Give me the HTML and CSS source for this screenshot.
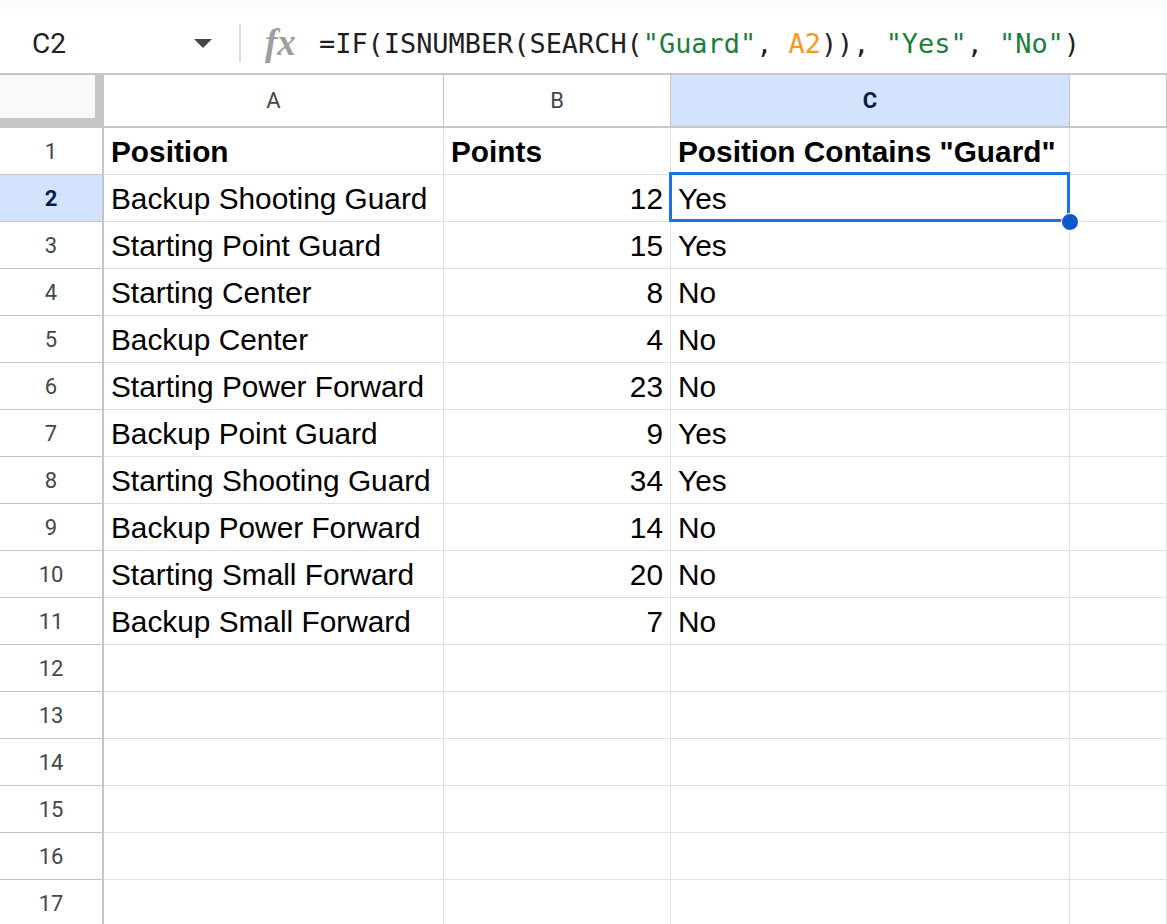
FILE: index.html
```html
<!DOCTYPE html>
<html lang="en">

<head>
    <meta charset="UTF-8">
    <title>Sheet</title>
    <link rel="stylesheet" href="styles.css">
</head>

<body>
    <div class="topstrip"></div>
    <div class="formulabar">
        <div class="namebox">
            <span class="namebox-text">C2</span>
            <span class="namebox-arrow"></span>
        </div>
        <div class="divider"></div>
        <span class="fx">fx</span>
        <div class="formula">=IF(ISNUMBER(SEARCH(<span class="str">"Guard"</span>, <span class="ref">A2</span>)), <span class="str">"Yes"</span>, <span class="str">"No"</span>)</div>
    </div>

    <div class="grid">
        <div class="corner"><div class="corner-inner"></div></div>
        <div class="colhdr">A</div>
        <div class="colhdr">B</div>
        <div class="colhdr active">C</div>
        <div class="colhdr"></div>

        <div class="rowhdr">1</div>
        <div class="cell bold">Position</div>
        <div class="cell bold">Points</div>
        <div class="cell bold">Position Contains "Guard"</div>
        <div class="cell"></div>

        <div class="rowhdr active">2</div>
        <div class="cell">Backup Shooting Guard</div>
        <div class="cell num">12</div>
        <div class="cell selected">Yes</div>
        <div class="cell"></div>

        <div class="rowhdr">3</div>
        <div class="cell">Starting Point Guard</div>
        <div class="cell num">15</div>
        <div class="cell">Yes</div>
        <div class="cell"></div>

        <div class="rowhdr">4</div>
        <div class="cell">Starting Center</div>
        <div class="cell num">8</div>
        <div class="cell">No</div>
        <div class="cell"></div>

        <div class="rowhdr">5</div>
        <div class="cell">Backup Center</div>
        <div class="cell num">4</div>
        <div class="cell">No</div>
        <div class="cell"></div>

        <div class="rowhdr">6</div>
        <div class="cell">Starting Power Forward</div>
        <div class="cell num">23</div>
        <div class="cell">No</div>
        <div class="cell"></div>

        <div class="rowhdr">7</div>
        <div class="cell">Backup Point Guard</div>
        <div class="cell num">9</div>
        <div class="cell">Yes</div>
        <div class="cell"></div>

        <div class="rowhdr">8</div>
        <div class="cell">Starting Shooting Guard</div>
        <div class="cell num">34</div>
        <div class="cell">Yes</div>
        <div class="cell"></div>

        <div class="rowhdr">9</div>
        <div class="cell">Backup Power Forward</div>
        <div class="cell num">14</div>
        <div class="cell">No</div>
        <div class="cell"></div>

        <div class="rowhdr">10</div>
        <div class="cell">Starting Small Forward</div>
        <div class="cell num">20</div>
        <div class="cell">No</div>
        <div class="cell"></div>

        <div class="rowhdr">11</div>
        <div class="cell">Backup Small Forward</div>
        <div class="cell num">7</div>
        <div class="cell">No</div>
        <div class="cell"></div>

        <div class="rowhdr">12</div>
        <div class="cell"></div><div class="cell"></div><div class="cell"></div><div class="cell"></div>
        <div class="rowhdr">13</div>
        <div class="cell"></div><div class="cell"></div><div class="cell"></div><div class="cell"></div>
        <div class="rowhdr">14</div>
        <div class="cell"></div><div class="cell"></div><div class="cell"></div><div class="cell"></div>
        <div class="rowhdr">15</div>
        <div class="cell"></div><div class="cell"></div><div class="cell"></div><div class="cell"></div>
        <div class="rowhdr">16</div>
        <div class="cell"></div><div class="cell"></div><div class="cell"></div><div class="cell"></div>
        <div class="rowhdr">17</div>
        <div class="cell"></div><div class="cell"></div><div class="cell"></div><div class="cell"></div>
    </div>
</body>

</html>
```

FILE: styles.css
```css
html,
body {
    margin: 0;
    height: 100%;
    overflow: hidden;
    background: #fff;
}

body {
    font-family: "Liberation Sans", Arial, sans-serif;
    color: #000;
}

.topstrip {
    height: 9px;
    background: #f9fbfd;
}

.formulabar {
    height: 64px;
    display: flex;
    align-items: center;
    border-bottom: 2px solid #c4c7c5;
}

.namebox {
    width: 239px;
    box-sizing: border-box;
    padding-left: 32px;
    padding-right: 27px;
    display: flex;
    align-items: center;
    justify-content: space-between;
}

.namebox-text {
    font-family: Roboto, sans-serif;
    font-size: 28px;
    color: #1f1f1f;
    margin-top: 4px;
}

.namebox-arrow {
    width: 0;
    height: 0;
    border-left: 9px solid transparent;
    border-right: 9px solid transparent;
    border-top: 9px solid #444746;
    margin-top: 4px;
}

.divider {
    width: 2px;
    height: 38px;
    background: #dadce0;
    margin-top: 4px;
}

.fx {
    margin-left: 24px;
    width: 40px;
    font-family: "Liberation Serif", serif;
    font-style: italic;
    font-weight: bold;
    font-size: 37px;
    color: #9e9e9e;
    margin-top: 2px;
}

.formula {
    margin-left: 14px;
    font-family: "DejaVu Sans Mono", monospace;
    font-size: 26.9px;
    color: #1f1f1f;
    white-space: nowrap;
    margin-top: 4px;
}

.formula .str {
    color: #188038;
}

.formula .ref {
    color: #f7981d;
}

.grid {
    display: grid;
    grid-template-columns: 104px 340px 227px 399px 1fr;
    grid-template-rows: 53px;
    grid-auto-rows: 47px;
}

.grid > div {
    box-sizing: border-box;
}

.corner {
    background: #c4c7c5;
    border-bottom: 2px solid #c4c7c5;
}

.corner-inner {
    width: 95px;
    height: 43px;
    background: #f8f9fa;
}

.colhdr {
    display: flex;
    align-items: center;
    justify-content: center;
    font-family: Roboto, sans-serif;
    font-size: 22px;
    color: #444746;
    border-right: 1px solid #c4c7c5;
    border-bottom: 2px solid #c4c7c5;
}

.colhdr:last-child {
    border-right: none;
}

.colhdr.active {
    background: #d3e3fd;
    color: #041e49;
    font-weight: bold;
}

.rowhdr {
    display: flex;
    align-items: center;
    justify-content: center;
    font-family: Roboto, sans-serif;
    font-size: 22px;
    color: #444746;
    border-right: 2px solid #c4c7c5;
    border-bottom: 1px solid #c4c7c5;
}

.rowhdr.active {
    background: #d3e3fd;
    color: #041e49;
    font-weight: bold;
}

.cell {
    position: relative;
    font-size: 29.8px;
    line-height: 46px;
    padding: 1px 7px 0 7px;
    white-space: nowrap;
    border-right: 1px solid #e1e1e1;
    border-bottom: 1px solid #e1e1e1;
}

.cell.bold {
    font-weight: bold;
}

.cell.num {
    text-align: right;
}

.cell.selected::after {
    content: "";
    position: absolute;
    left: -2px;
    top: -3px;
    right: -1px;
    bottom: -1px;
    border: 3px solid #1a73e8;
}

.cell.selected::before {
    content: "";
    position: absolute;
    right: -10px;
    bottom: -10px;
    width: 16px;
    height: 16px;
    border-radius: 50%;
    background: #0b57d0;
    border: 1px solid #fff;
    z-index: 2;
}
```
